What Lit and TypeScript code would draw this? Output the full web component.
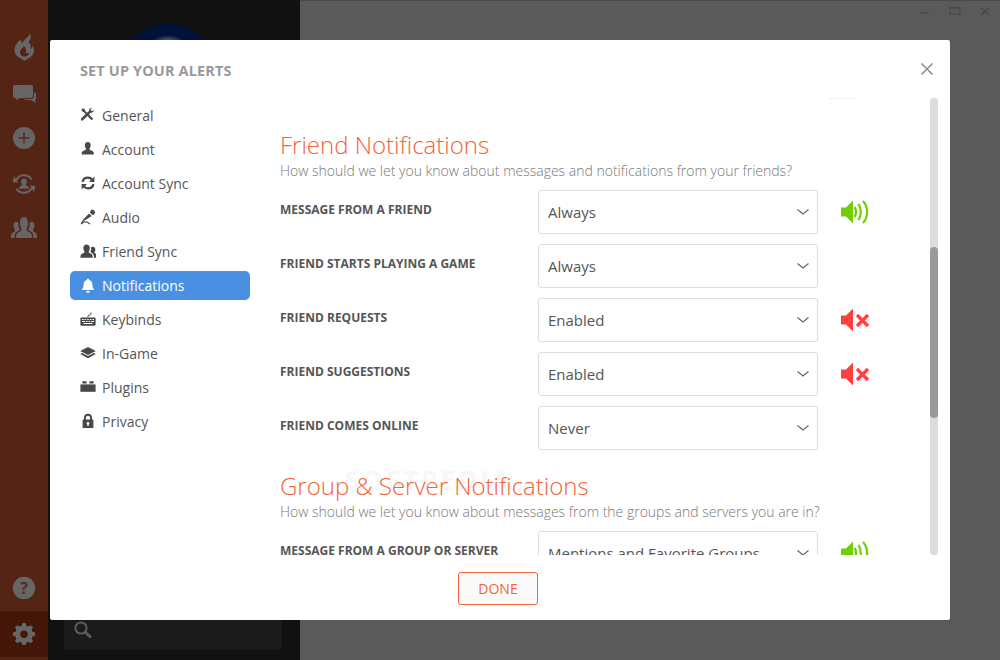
import { LitElement, html, css, svg } from "lit";
import { customElement } from "lit/decorators.js";

const navIcons: Record<string, unknown> = {
  General: svg`<g transform="translate(0 .4) scale(.88)"><path d="M2.200 1.200 5 1.600 6 4.200 8 6.200 10.400 3.800C10.200 2 11.600 .4 13.600 .5L12 2.200 12.600 3.800 14.200 4.200 15.600 2.800C15.900 4.800 14.200 6.600 12.200 6L10.200 8 15 12.800 13.200 14.600 8.400 9.800 3.200 15 1.200 14.800 1 13 6.400 7.600 4.400 5.600 1.800 4.200Z"/></g>`,
  Account: svg`<g transform="translate(.4 .2) scale(.92 .88)"><path d="M8 1C10.200 1 11.400 2.800 11.200 5 11 7 10.200 8.200 9.600 9 9.800 10 11.600 10.600 13 11.200 14.200 11.800 14.600 12.600 14.600 15H1.400C1.400 12.600 1.800 11.800 3 11.200 4.400 10.600 6.200 10 6.400 9 5.800 8.200 5 7 4.800 5 4.600 2.800 5.800 1 8 1Z"/></g>`,
  "Account Sync": svg`<path fill="none" stroke="currentColor" stroke-width="2.200" d="M2.600 7C3 4.400 5.200 2.600 8 2.600 9.800 2.600 11 3.200 12 4.600M13.400 9C13 11.600 10.800 13.400 8 13.400 6.200 13.400 5 12.800 4 11.400"/><path d="M14.400 1.400V7H9ZM1.600 14.600V9H7Z"/>`,
  Audio: svg`<path d="M11 1.200C12.200 .4 13.800 1 14.600 2.200 15.400 3.400 15 4.800 14 5.600L12.800 6.200 9.800 3.400Z"/><path d="M9 4.400 11.800 7 5.800 10.800 4.400 11.800 3 10.600 4.400 9.200Z"/><path fill="none" stroke="currentColor" stroke-width="1.100" d="M3.400 11 1.200 15 4 12.800 7 13 10 15"/>`,
  "Friend Sync": svg`<g transform="translate(0 -.6) scale(1.1)"><path d="M6 2C8 2 9 3.400 8.900 5.400 8.800 7 8.200 8 7.800 8.800 8 9.600 9.400 10 10.400 10.600 11.400 11.100 11.600 12 11.600 14H.4C.4 12 .6 11.100 1.600 10.600 2.600 10 4 9.600 4.200 8.800 3.800 8 3.200 7 3.100 5.400 3 3.400 4 2 6 2Z"/><path d="M11.600 4C13.200 4 14 5.200 13.900 6.600 13.800 7.800 13.400 8.600 13 9.200 13.200 9.800 14.200 10.200 15 10.600 15.700 11 15.900 12 15.900 14H12.700C12.700 11.800 12.400 10.400 10.500 9.400 10 9.100 9.600 8.900 9.400 8.700 9.900 7.800 10.200 6.800 10.100 5.200 10.100 4.900 10 4.600 10 4.400 10.400 4.200 11 4 11.600 4Z"/></g>`,
  Notifications: svg`<path d="M8 .8C8.700 .8 9.200 1.300 9.200 2 11.400 2.600 12.400 4.400 12.400 6.600 12.400 9.600 13.200 10.800 14.400 12H1.600C2.800 10.800 3.600 9.600 3.600 6.600 3.600 4.400 4.600 2.600 6.800 2 6.800 1.300 7.300 .8 8 .8Z"/><path d="M6.200 13H9.800C9.800 14.200 9 15 8 15S6.200 14.200 6.200 13Z"/>`,
  Keybinds: svg`<path fill-rule="evenodd" d="M1.600 6.400H14.400C15.200 6.400 15.600 6.800 15.600 7.600V13.600C15.600 14.400 15.200 14.800 14.400 14.800H1.600C.8 14.800 .4 14.400 .4 13.600V7.600C.4 6.800 .8 6.400 1.600 6.400ZM2 8V9H3.600V8ZM4.600 8V9H6.200V8ZM7.200 8V9H8.800V8ZM9.800 8V9H11.400V8ZM12.400 8V9H14V8ZM2 10V11H5V10ZM6 10V11H7.600V10ZM8.600 10V11H10.200V10ZM11.200 10V11H14V10ZM3.600 12V13H12.400V12Z"/><path fill="none" stroke="currentColor" stroke-width="1" d="M8 6.400V5C8 3.600 11 4.600 11 3V1.400"/>`,
  "In-Game": svg`<path d="M8 2 15.800 6 8 10 .2 6Z"/><path d="M2.200 8 8 11 13.800 8 15.800 9 8 13.200 .2 9Z"/>`,
  Plugins: svg`<g transform="translate(0 -1)"><path d="M2.400 3.200H6.600V5.400H2.400ZM9.400 3.200H13.600V5.400H9.400Z"/><path d="M.4 6.400H15.600V13.800H.4Z"/></g>`,
  Privacy: svg`<path fill-rule="evenodd" d="M8 .8C10.400 .8 12 2.400 12 4.800V6.600H13.400V15H2.600V6.600H4V4.800C4 2.400 5.600 .8 8 .8ZM8 2.800C6.800 2.800 6 3.600 6 4.800V6.600H10V4.800C10 3.600 9.200 2.800 8 2.800ZM8 9C7.200 9 6.600 9.600 6.600 10.300 6.600 10.800 6.900 11.200 7.300 11.400V13H8.700V11.400C9.100 11.200 9.400 10.800 9.400 10.300 9.400 9.600 8.800 9 8 9Z"/>`,
};
const navItems = ["General","Account","Account Sync","Audio","Friend Sync","Notifications","Keybinds","In-Game","Plugins","Privacy"];

type Row = { label: string; value: string; sound?: "on" | "off" };
const friendRows: Row[] = [
  { label: "Message from a friend", value: "Always", sound: "on" },
  { label: "Friend starts playing a game", value: "Always" },
  { label: "Friend requests", value: "Enabled", sound: "off" },
  { label: "Friend suggestions", value: "Enabled", sound: "off" },
  { label: "Friend comes online", value: "Never" },
];
const groupRows: Row[] = [
  { label: "Message from a group or server", value: "Mentions and Favorite Groups", sound: "on" },
];

@customElement("app-root")
export class AppRoot extends LitElement {
  static styles = css`
    :host { display: block; width: 1000px; height: 660px; position: relative; overflow: hidden; font-family: "Open Sans", "Liberation Sans", sans-serif; }
    .shell { display: flex; height: 660px; background: #5a5a5a; }
    .rail { width: 48px; flex: none; background: #542415; display: flex; flex-direction: column; align-items: center; color: #666; }
    .rail svg { width: 36px; height: 36px; display: block; }
    .rail .top { display: flex; flex-direction: column; gap: 10px; padding-top: 28px; flex: 1; }
    .rail .help { margin-bottom: 5px; }
    .rail .gear { width: 48px; height: 46px; margin-bottom: 3px; background: #451708; display: flex; align-items: center; justify-content: center; }
    .dark { width: 252px; flex: none; background: #111; display: flex; flex-direction: column; }
    .avatar { width: 96px; height: 96px; margin: 24px 0 0 72px; border-radius: 50%; background: radial-gradient(ellipse 17px 9px at 50% 20px, #8a8a8a, rgba(120,120,120,0)), #00123a; }
    .search { margin: auto 0 10px 16px; width: 218px; height: 40px; background: #1b1b1b; border-radius: 2px; display: flex; align-items: center; padding-left: 9px; box-sizing: border-box; color: #5c5c5c; }
    .search svg { width: 20px; height: 20px; }
    .main { flex: 1; border-top: 1px solid #4a4a4a; height: 659px; display: flex; justify-content: flex-end; gap: 15px; padding: 5px 8px 0 0; box-sizing: border-box; color: #474747; }
    .main svg { width: 15px; height: 15px; }
    .modal { position: absolute; left: 50px; top: 40px; width: 900px; height: 580px; background: #fff; border-radius: 2px; display: flex; flex-direction: column; }
    .title { font-size: 14.5px; font-weight: 700; color: #999; text-transform: uppercase; padding: 22px 30px 0; line-height: 18px; letter-spacing: .13px; }
    .close { position: absolute; right: 16px; top: 22px; width: 14px; height: 14px; color: #8f8f8f; }
    .body { display: flex; flex: none; height: 457px; margin-top: 18px; }
    .nav { width: 180px; margin-left: 20px; flex: none; padding-top: 2px; display: flex; flex-direction: column; gap: 4px; }
    .item { height: 30px; display: flex; align-items: center; gap: 6px; padding-left: 10px; font-size: 14px; color: #555; border-radius: 5px; box-sizing: border-box; }
    .item svg { width: 16px; height: 16px; fill: currentColor; color: #484848; flex: none; }
    .item.active { background: #4a90e2; color: #fff; margin-top: 1px; height: 29px; }
    .item.active svg { color: #fff; }
    .content { margin-left: 30px; width: 630px; height: 457px; overflow: hidden; position: relative; padding-top: 31px; box-sizing: border-box; flex: none; }
    h2 { margin: 0; font-size: 24px; font-weight: 300; line-height: 32px; color: #f4623a; position: relative; }
    .sub { font-size: 14px; font-weight: 300; line-height: 20px; color: #777; margin-bottom: 9px; position: relative; }
    .rows { display: flex; flex-direction: column; gap: 10px; margin-bottom: 20px; position: relative; }
    .row { display: flex; height: 44px; }
    .label { width: 258px; flex: none; font-size: 12px; font-weight: 700; color: #555; text-transform: uppercase; line-height: 40px; }
    .select { width: 280px; height: 44px; flex: none; box-sizing: border-box; border: 1px solid #ddd; border-radius: 3px; display: flex; align-items: center; justify-content: space-between; padding: 0 7px 0 9px; font-size: 15px; color: #555; }
    .select svg { width: 14px; height: 8px; color: #666; margin-top: -1px; }
    .sound { width: 32px; height: 26px; margin: 9px 0 0 22px; flex: none; }
    .track { position: absolute; left: 880px; top: 58px; width: 8px; height: 457px; background: #dcdcdc; border-radius: 4px; }
    .thumb { position: absolute; left: 0; top: 149px; width: 8px; height: 171px; background: #9a9a9a; border-radius: 4px; }
    .tick { position: absolute; left: 778px; top: 58px; width: 30px; height: 1px; background: #f2f2f2; }
    .mark { position: absolute; left: 65px; top: 367px; font-size: 26px; font-weight: 700; letter-spacing: 3px; color: #f7f7f7; line-height: 30px; }
    .footer { flex: 1; display: flex; justify-content: center; align-items: flex-start; padding: 17px 4px 0 0; }
    .done { width: 80px; height: 33px; box-sizing: border-box; border: 1px solid #f4623a; border-radius: 3px; background: #fafafa; color: #f4623a; font: 14px "Open Sans", sans-serif; padding: 0; }
  `;

  private sound(kind?: "on" | "off") {
    if (!kind) return null;
    return kind === "on"
      ? html`<svg class="sound" viewBox="0 0 32 26"><path fill="#6fcf00" d="M1 8.600H6L13 1.400V24.600L6 17.400H1Z"/><g fill="none" stroke="#6fcf00" stroke-width="2.200"><path d="M14.500 8C16.500 10.500 16.500 15.500 14.500 18"/><path d="M18.500 5C21.500 9 21.500 17 18.500 21"/><path d="M23 2C28.500 8 28.500 18 23 24"/></g></svg>`
      : html`<svg class="sound" viewBox="0 0 32 26"><path fill="#ff4040" d="M1 8.600H6L13 1.400V24.600L6 17.400H1Z"/><path fill="none" stroke="#ff4040" stroke-width="3.200" d="M17 8 28 19M28 8 17 19"/></svg>`;
  }

  private rows(rows: Row[]) {
    return html`<div class="rows">${rows.map((r) => html`
      <div class="row">
        <div class="label">${r.label}</div>
        <div class="select"><span>${r.value}</span><svg viewBox="0 0 14 8"><path fill="none" stroke="currentColor" stroke-width="1.200" d="M1.500 1.500 7 6 12.500 1.500"/></svg></div>
        ${this.sound(r.sound)}
      </div>`)}</div>`;
  }

  render() {
    return html`
      <div class="shell">
        <div class="rail">
          <div class="top">
            <svg viewBox="0 0 36 36"><path fill="currentColor" fill-rule="evenodd" d="M24 5C23.500 9 19 10.500 16 15 15 13.500 15 12 15.500 11 11 14 8 18.500 8.500 23 9 27 12 29 15 30.500L18.500 33 22 30.500C25.500 29 28 26.500 28 22.500 28 20.500 27.500 19 26.500 17.500 26.500 19 26 20.500 24.500 21 25.500 17.500 24 15 22.500 14.500 24.500 11.500 25.500 8.500 24 5ZM18 18C16.500 20.500 14 21.500 14 24.500 14 27 16 28.500 18.500 28.500 21 28.500 23 27 23 24.500 22 25.500 21 25.500 20 25 20.500 22.500 20 20 18 18Z"/></svg>
            <svg viewBox="0 0 36 36"><path fill="currentColor" d="M9 11H25C26.200 11 27 11.800 27 13V22C27 23.200 26.200 24 25 24H14L9.500 26.500 10.500 24H9C7.800 24 7 23.200 7 22V13C7 11.800 7.800 11 9 11Z"/><path fill="currentColor" d="M28 18.500H28.500C29.500 18.500 30 19.200 30 20V25C30 25.500 29.500 26 29 26L29.800 29 25 26H20L17.500 25H25C26.800 25 28 24 28 22Z"/></svg>
            <svg viewBox="0 0 36 36"><circle cx="18" cy="18" r="11" fill="currentColor"/><path stroke="#5a2a28" stroke-width="1.600" d="M18 12.500V23.500M12.500 18H23.500"/></svg>
            <svg viewBox="0 0 36 36"><g transform="translate(18 18) scale(.85) translate(-18 -18)"><g fill="none" stroke="currentColor" stroke-width="2.300"><path d="M8.200 15C9.600 10.600 13.400 7.800 18 7.800 22 7.800 25 9.600 27 12.600"/><path d="M27.800 21C26.400 25.400 22.600 28.200 18 28.200 14 28.200 11 26.400 9 23.400"/></g><path fill="currentColor" d="M6.500 8.500 11 16.500 4.500 15.500ZM29.500 27.500 25 19.500 31.500 20.500Z"/><path fill="currentColor" d="M18 11.500C20.200 11.500 21.600 13.200 21.400 15.400 21.200 17 20.600 18 20 18.800 20.400 19.800 22 20.200 23 20.800 23.700 21.300 24 22.200 24 23.500H12C12 22.200 12.300 21.300 13 20.800 14 20.200 15.600 19.800 16 18.800 15.400 18 14.800 17 14.600 15.400 14.400 13.200 15.800 11.500 18 11.500Z"/></g></svg>
            <svg viewBox="0 0 36 36"><g transform="translate(18 15.500) scale(.93 1.200) translate(-18 -15.750)"><path fill="currentColor" d="M18 7C21 7 22.500 9.500 22.300 12.500 22.100 15 21.200 16.400 20.600 17.400 21 18.800 23.500 19.400 25 20.200 26 20.800 26.500 22 26.500 24.500H9.500C9.500 22 10 20.800 11 20.200 12.500 19.400 15 18.800 15.400 17.400 14.800 16.400 13.900 15 13.700 12.500 13.500 9.500 15 7 18 7Z"/><path fill="currentColor" d="M9.500 11C10.500 11 11.400 11.400 12 12 12 14.400 12.600 16 13.500 17.400 13 18.400 11 18.900 9.600 19.600 8.600 20.200 8 21.600 8 24.500H4C4 22 4.400 21 5.400 20.400 6.600 19.600 8.200 19.200 8.400 18.200 7.900 17.400 7 16.200 6.800 14.600 6.600 12.600 7.600 11 9.500 11ZM26.500 11C28.400 11 29.400 12.600 29.200 14.600 29 16.200 28.100 17.400 27.600 18.200 27.800 19.200 29.400 19.600 30.600 20.400 31.600 21 32 22 32 24.500H28C28 21.600 27.400 20.200 26.400 19.600 25 18.900 23 18.400 22.500 17.400 23.400 16 24 14.400 24 12 24.600 11.400 25.500 11 26.500 11Z"/></g></svg>
          </div>
          <svg class="help" viewBox="0 0 36 36"><circle cx="18" cy="18" r="11.200" fill="currentColor"/><text x="18" y="23.500" text-anchor="middle" font-family="Open Sans" font-weight="700" font-size="16" fill="#5a2a28">?</text></svg>
          <div class="gear"><svg viewBox="0 0 36 36"><g transform="translate(18 18) scale(.82) translate(-18 -18)"><path fill="currentColor" fill-rule="evenodd" d="M16 6.500H20L20.800 9.800 23.400 10.900 26.200 9.200 29 12 27.300 14.800 28.400 17.400 31.500 18.200V22.200L28.400 23 27.300 25.600 29 28.400 26.200 31.200 23.400 29.500 20.800 30.600 20 33.500H16L15.200 30.600 12.600 29.500 9.800 31.200 7 28.400 8.700 25.600 7.600 23 4.500 22.200V18.200L7.600 17.400 8.700 14.800 7 12 9.800 9.200 12.600 10.900 15.200 9.800ZM18 15.600A4.600 4.600 0 1 0 18 24.800 4.600 4.600 0 1 0 18 15.600Z" transform="translate(0 -2)"/></g></svg></div>
        </div>
        <div class="dark">
          <div class="avatar"></div>
          <div class="search"><svg viewBox="0 0 20 20"><circle cx="8" cy="8" r="5.600" fill="none" stroke="currentColor" stroke-width="2"/><path stroke="currentColor" stroke-width="3" d="M12 12 18 17.500"/></svg></div>
        </div>
        <div class="main">
          <svg viewBox="0 0 15 15"><path stroke="currentColor" stroke-width="1.500" d="M4 7H12"/></svg>
          <svg viewBox="0 0 15 15"><path fill="none" stroke="currentColor" stroke-width="1.200" d="M3 1.500H13V8H3ZM3 1.800H13"/></svg>
          <svg viewBox="0 0 15 15"><path fill="none" stroke="currentColor" stroke-width="1.300" d="M4 2 12 9M12 2 4 9"/></svg>
        </div>
      </div>
      <div class="modal">
        <div class="title">Set up your alerts</div>
        <svg class="close" viewBox="0 0 14 14"><path fill="none" stroke="currentColor" stroke-width="1.600" d="M1.500 1.500 12.500 12.500M12.500 1.500 1.500 12.500"/></svg>
        <div class="body">
          <div class="nav">
            ${navItems.map((n) => html`<div class="item ${n === "Notifications" ? "active" : ""}"><svg viewBox="0 0 16 16">${navIcons[n]}</svg>${n}</div>`)}
          </div>
          <div class="content">
            <div class="mark">SOFTPEDIA</div>
            <h2>Friend Notifications</h2>
            <div class="sub">How should we let you know about messages and notifications from your friends?</div>
            ${this.rows(friendRows)}
            <h2>Group &amp; Server Notifications</h2>
            <div class="sub">How should we let you know about messages from the groups and servers you are in?</div>
            ${this.rows(groupRows)}
          </div>
        </div>
        <div class="tick"></div>
        <div class="track"><div class="thumb"></div></div>
        <div class="footer"><button class="done">DONE</button></div>
      </div>
    `;
  }
}
